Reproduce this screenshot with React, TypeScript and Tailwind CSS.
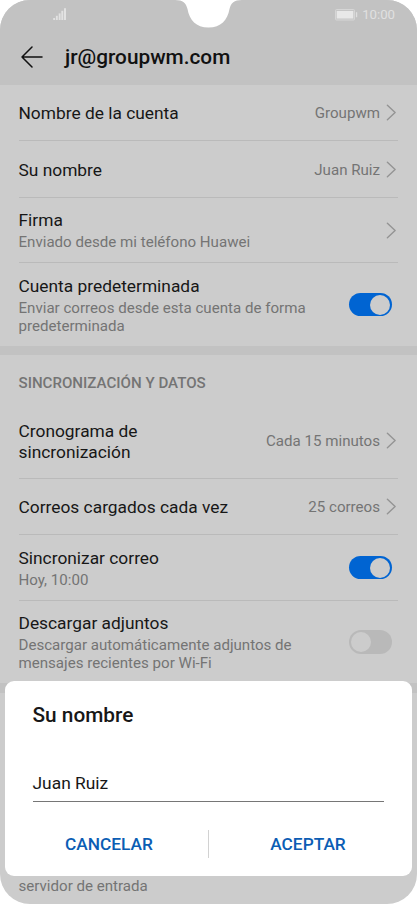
import React from 'react';

const Chevron: React.FC = () => (
  <svg className="w-[10px] h-[17px] shrink-0" viewBox="0 0 10 17" fill="none" stroke="#949494" strokeWidth="1.4" strokeLinecap="round" strokeLinejoin="round">
    <path d="M1.4 1.2L9.1 8.5L1.4 15.8" />
  </svg>
);

const Toggle: React.FC<{ on?: boolean }> = ({ on = false }) => (
  <span
    role="switch"
    aria-checked={on}
    className={`flex items-center w-[43px] h-[23.5px] rounded-full shrink-0 ${on ? 'bg-[#0064d2] justify-end pr-[2px]' : 'bg-[#b9b9b9] justify-start pl-[2px]'}`}
  >
    <span className="size-5 rounded-full bg-[#cccccc]" />
  </span>
);

interface RowProps {
  title: React.ReactNode;
  subtitle?: React.ReactNode;
  value?: string;
  toggle?: boolean;
  height: string;
  last?: boolean;
}

const Row: React.FC<RowProps> = ({ title, subtitle, value, toggle, height, last }) => (
  <div className={`flex items-center justify-between ml-[18.5px] mr-[19px] ${last ? '' : 'border-b border-[#bababa]'} ${height}`}>
    <div className={subtitle ? 'pt-px' : 'pt-[2px]'}>
      <div className="text-[17.35px] leading-[21px] text-[#171717] whitespace-nowrap">{title}</div>
      {subtitle && (
        <div className="mt-[2px] text-[15.1px] leading-[18px] text-[#747474] whitespace-nowrap">{subtitle}</div>
      )}
    </div>
    {toggle === undefined ? (
      <div className="flex items-center gap-[6px] pr-[2px]">
        {value && <span className="pt-px text-[15.1px] leading-[18px] text-[#747474]">{value}</span>}
        <Chevron />
      </div>
    ) : (
      <div className="pr-[6px]">
        <Toggle on={toggle} />
      </div>
    )}
  </div>
);

const StatusBar: React.FC = () => (
  <div className="flex justify-between h-[30px] pl-[53px] pr-[22px] pt-[8px]">
    <svg className="w-[14px] h-[12px]" viewBox="0 0 14 12" fill="#e2e2e2">
      <rect x="0.2" y="10" width="1.9" height="2" />
      <rect x="2.9" y="7.8" width="1.9" height="4.2" />
      <rect x="5.7" y="5.4" width="1.9" height="6.6" />
      <rect x="8.3" y="2.8" width="2" height="9.2" />
      <rect x="11" y="0.2" width="2" height="11.8" />
    </svg>
    <div className="flex gap-1">
      <svg className="w-[24px] h-[12px] mt-px" viewBox="0 0 24 12">
        <rect x="1.5" y="0.5" width="19" height="10.5" rx="1" fill="#c6c6c6" stroke="#d6d6d6" />
        <rect x="2.7" y="2" width="16.6" height="7.5" fill="#e8e8e8" />
        <rect x="21.9" y="3.2" width="1.3" height="5" fill="#dfdfdf" />
      </svg>
      <span className="text-[13.2px] leading-[14px] text-[#e0e0e0]">10:00</span>
    </div>
  </div>
);

const NameDialog: React.FC = () => (
  <div role="dialog" className="absolute left-[5px] right-[5px] top-[681px] h-[195px] rounded-[9px] bg-white">
    <h2 className="px-[27.5px] pt-[22px] text-[20.8px] leading-[24px] font-medium text-[#171717]">Su nombre</h2>
    <div className="ml-[27.5px] mr-[28px] mt-[37px] h-[38px] pt-[9px] border-b border-[#767676] text-[17.4px] leading-[21px] text-[#171717]">
      Juan Ruiz
    </div>
    <div className="flex items-center px-[5px] mt-[21px] h-[41px] text-[17.3px] font-medium text-[#0b5db4]">
      <button className="flex-1 h-7 leading-[28px]">CANCELAR</button>
      <span className="w-px h-[28px] bg-[#d2d2d2]" />
      <button className="flex-1 h-7 leading-[28px]">ACEPTAR</button>
    </div>
  </div>
);

export default function App() {
  return (
    <div className="w-[417px] h-[904px] overflow-hidden bg-white font-['Roboto',sans-serif]">
      <div className="relative flex flex-col h-full overflow-hidden rounded-[30px] bg-[#cccccc]">
        <header className="h-[85px] shrink-0 bg-[#c2c2c2]">
          <StatusBar />
          <div className="flex items-center h-[54px] pl-[21px]">
            <svg className="w-[22px] h-[22px]" viewBox="0 0 22 22" fill="none" stroke="#111111" strokeWidth="1.5" strokeLinecap="round" strokeLinejoin="round">
              <path d="M21 11H1M11 1L1 11L11 21" />
            </svg>
            <h1 className="ml-[22px] text-[20.8px] leading-[24px] font-medium text-[#111111]">jr@groupwm.com</h1>
          </div>
        </header>

        <Row title="Nombre de la cuenta" value="Groupwm" height="h-[56px]" />
        <Row title="Su nombre" value="Juan Ruiz" height="h-[57px]" />
        <Row title="Firma" subtitle="Enviado desde mi teléfono Huawei" height="h-[65px]" />
        <Row
          title="Cuenta predeterminada"
          subtitle={<>Enviar correos desde esta cuenta de forma<br />predeterminada</>}
          toggle={true}
          height="h-[83px]"
          last
        />

        <div className="h-[9px] shrink-0 bg-[#c2c2c2]" />

        <h3 className="h-[48px] shrink-0 pl-[18.5px] pt-[19px] text-[15.1px] leading-[18px] font-medium text-[#747474]">
          SINCRONIZACIÓN Y DATOS
        </h3>
        <Row title={<>Cronograma de<br />sincronización</>} value="Cada 15 minutos" height="h-[76px]" />
        <Row title="Correos cargados cada vez" value="25 correos" height="h-[56px]" />
        <Row title="Sincronizar correo" subtitle="Hoy, 10:00" toggle={true} height="h-[66px]" />
        <Row
          title="Descargar adjuntos"
          subtitle={<>Descargar automáticamente adjuntos de<br />mensajes recientes por Wi-Fi</>}
          toggle={false}
          height="h-[82px]"
          last
        />

        <div className="h-[10px] shrink-0 bg-[#c2c2c2]" />

        <div className="mt-auto h-[27px] shrink-0 pl-[18.5px] text-[15.1px] leading-[18px] text-[#747474]">
          servidor de entrada
        </div>

        {/* camera notch */}
        <svg className="absolute top-0 left-[175px] w-[67px] h-[28px]" viewBox="0 0 67 28" fill="#ffffff">
          <path d="M0 0C8 0 11 3 12.5 9C14.5 20 21 27.5 33.5 27.5C46 27.5 52.5 20 54.5 9C56 3 59 0 67 0Z" />
        </svg>

        <NameDialog />
      </div>
    </div>
  );
}
